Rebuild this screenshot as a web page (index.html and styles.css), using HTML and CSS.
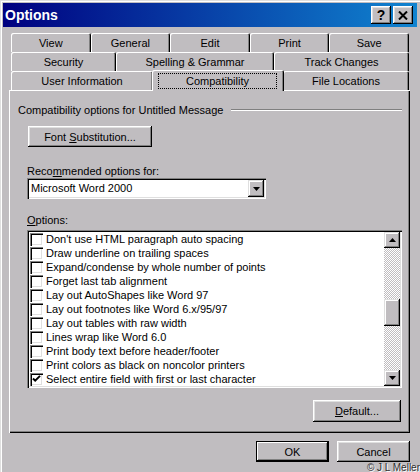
FILE: index.html
```html
<!DOCTYPE html>
<html lang="en">
<head>
  <meta charset="UTF-8">
  <meta name="viewport" content="width=device-width, initial-scale=1.0">
  <title>Options</title>
  <link rel="stylesheet" href="styles.css">
</head>
<body>
  <div class="window">
    <!-- Title bar -->
    <div class="titlebar">
      <span class="title">Options</span>
      <div class="caption-buttons">
        <div class="caption-btn help">?</div>
        <div class="caption-btn close">
          <svg width="10" height="9" viewBox="0 0 10 9"><path d="M1 0.5 L9 8.5 M9 0.5 L1 8.5" stroke="#000" stroke-width="2"/></svg>
        </div>
      </div>
    </div>

    <div class="body">
      <!-- Tabs -->
      <div class="tabs">
        <div class="tab-row equal">
          <div class="tab">View</div>
          <div class="tab">General</div>
          <div class="tab">Edit</div>
          <div class="tab">Print</div>
          <div class="tab">Save</div>
        </div>
        <div class="tab-row">
          <div class="tab w-security">Security</div>
          <div class="tab w-spelling">Spelling &amp; Grammar</div>
          <div class="tab w-track">Track Changes</div>
        </div>
        <div class="tab-row">
          <div class="tab w-user">User Information</div>
          <div class="tab w-compat active"><span class="focus">Compatibility</span></div>
          <div class="tab w-files">File Locations</div>
        </div>
      </div>

      <!-- Tab page -->
      <div class="panel">
        <div class="group-head">
          <span>Compatibility options for Untitled Message</span>
          <span class="etch"></span>
        </div>

        <div class="indent">
          <div class="btn font-sub"><span>Font <u>S</u>ubstitution...</span></div>

          <div class="field-label first">Reco<u>m</u>mended options for:</div>
          <div class="combo">
            <span class="combo-text">Microsoft Word 2000</span>
            <span class="combo-btn">
              <svg width="7" height="4" viewBox="0 0 7 4"><path d="M0 0 H7 L3.5 4 Z" fill="#000"/></svg>
            </span>
          </div>

          <div class="field-label"><u>O</u>ptions:</div>
          <div class="listbox">
            <div class="list-items" id="list"></div>
            <div class="scrollbar">
              <span class="scroll-btn">
                <svg width="7" height="4" viewBox="0 0 7 4"><path d="M0 4 H7 L3.5 0 Z" fill="#000"/></svg>
              </span>
              <div class="track"><span class="thumb"></span></div>
              <span class="scroll-btn">
                <svg width="7" height="4" viewBox="0 0 7 4"><path d="M0 0 H7 L3.5 4 Z" fill="#000"/></svg>
              </span>
            </div>
          </div>

          <div class="right-row">
            <div class="btn default-btn"><span><u>D</u>efault...</span></div>
          </div>
        </div>
      </div>

      <!-- Dialog buttons -->
      <div class="dialog-buttons">
        <div class="btn ok">OK</div>
        <div class="btn">Cancel</div>
      </div>
    </div>

    <div class="credit">© J L Meller</div>
  </div>

  <script>
    // Options shown in the list
    const options = [
      ["Don't use HTML paragraph auto spacing", false],
      ["Draw underline on trailing spaces", false],
      ["Expand/condense by whole number of points", false],
      ["Forget last tab alignment", false],
      ["Lay out AutoShapes like Word 97", false],
      ["Lay out footnotes like Word 6.x/95/97", false],
      ["Lay out tables with raw width", false],
      ["Lines wrap like Word 6.0", false],
      ["Print body text before header/footer", false],
      ["Print colors as black on noncolor printers", false],
      ["Select entire field with first or last character", true]
    ];

    const list = document.getElementById('list');
    options.forEach(([label, checked]) => {
      const row = document.createElement('div');
      row.classList.add('list-row');
      const mark = checked
        ? '<svg width="13" height="13" viewBox="0 0 13 13"><path d="M3 5.5 L5.2 7.7 L10 2.9" stroke="#000" stroke-width="2" fill="none"/></svg>'
        : '';
      row.innerHTML = `<span class="checkbox">${mark}</span><span class="list-label">${label}</span>`;
      list.appendChild(row);
    });
  </script>
</body>
</html>
```

FILE: styles.css
```css
/* General */
* {
  box-sizing: border-box;
}

body {
  margin: 0;
  font-family: "Liberation Sans", Arial, sans-serif;
  font-size: 11px;
  color: #000;
  background: #c0bdc0;
}

u {
  text-decoration-thickness: 1px;
  text-underline-offset: 1px;
}

.window {
  position: relative;
  width: 420px;
  height: 472px;
  padding: 3px 3px 0;
  background: #c0bdc0;
  box-shadow: inset 1px 1px #dfdfdf, inset 2px 2px #fff;
  overflow: hidden;
}

/* Title bar */
.titlebar {
  display: flex;
  align-items: center;
  height: 24px;
  padding: 0 4px 0 2px;
  background: linear-gradient(90deg, #000080, #1084d0);
}

.title {
  color: #fff;
  font-weight: bold;
  font-size: 14px;
}

.caption-buttons {
  margin-left: auto;
  display: flex;
  gap: 2px;
}

.caption-btn {
  width: 20px;
  height: 18px;
  display: flex;
  align-items: center;
  justify-content: center;
  background: #c0bdc0;
  box-shadow: inset -1px -1px #000, inset 1px 1px #fff, inset -2px -2px #808080, inset 2px 2px #dfdfdf;
}

.caption-btn.help {
  font-weight: bold;
  font-size: 14px;
  line-height: 18px;
}

/* Body */
.body {
  margin: 6px 7px 0 6px;
}

/* Tabs */
.tab-row {
  display: flex;
  height: 19px;
  margin: 0 1px 0 2px;
}

.tab {
  height: 19px;
  padding-top: 2px;
  line-height: 17px;
  text-align: center;
  white-space: nowrap;
  background: #c0bdc0;
  border-radius: 2px 2px 0 0;
  box-shadow: inset 1px 1px #fff, inset -1px 0 #000, inset -2px 0 #808080;
}

.tab-row.equal .tab {
  flex: 1;
}

.w-security { width: 105px; }
.w-spelling { width: 158px; }
.w-track { width: 135px; }
.w-user { width: 142px; }
.w-compat { width: 130px; }
.w-files { width: 126px; }

.tab.active {
  position: relative;
  z-index: 1;
  width: 132px;
  height: 21px;
  margin: -1px -1px 0;
  padding: 3px 7px 2px 6px;
}

.focus {
  display: block;
  height: 16px;
  line-height: 15px;
  border: 1px dotted #000;
}

/* Tab page */
.panel {
  height: 343px;
  padding: 13px 8px 0 9px;
  box-shadow: inset 1px 1px #fff, inset -1px -1px #000, inset -2px -2px #808080;
}

.group-head {
  display: flex;
  align-items: center;
  height: 14px;
  line-height: 14px;
}

.etch {
  flex: 1;
  height: 2px;
  margin-left: 8px;
  border-top: 1px solid #808080;
  border-bottom: 1px solid #fff;
}

.indent {
  padding-left: 9px;
}

/* Buttons */
.btn {
  display: flex;
  align-items: center;
  justify-content: center;
  height: 21px;
  white-space: nowrap;
  background: #c0bdc0;
  box-shadow: inset -1px -1px #000, inset 1px 1px #fff, inset -2px -2px #808080, inset 2px 2px #dfdfdf;
}

.font-sub {
  width: 124px;
  margin: 9px 0 0 1px;
}

.field-label {
  height: 14px;
  line-height: 14px;
  margin-top: 14px;
}

.field-label.first {
  margin-top: 17px;
}

/* Combo box */
.combo {
  display: flex;
  width: 239px;
  height: 21px;
  padding: 2px;
  background: #fff;
  box-shadow: inset 1px 1px #808080, inset 2px 2px #000, inset -1px -1px #fff, inset -2px -2px #dfdfdf;
}

.combo-text {
  flex: 1;
  padding-left: 2px;
  line-height: 17px;
}

.combo-btn,
.scroll-btn {
  display: flex;
  align-items: center;
  justify-content: center;
  width: 16px;
  background: #c0bdc0;
  box-shadow: inset -1px -1px #000, inset 1px 1px #dfdfdf, inset -2px -2px #808080, inset 2px 2px #fff;
}

/* List box */
.listbox {
  display: flex;
  width: 375px;
  height: 158px;
  margin-top: 3px;
  padding: 2px;
  background: #fff;
  box-shadow: inset 1px 1px #808080, inset 2px 2px #000, inset -1px -1px #fff, inset -2px -2px #dfdfdf;
}

.list-items {
  flex: 1;
  overflow: hidden;
}

.list-row {
  display: flex;
  align-items: center;
  height: 14px;
  padding-left: 1px;
  white-space: nowrap;
}

.checkbox {
  width: 13px;
  height: 13px;
  background: #fff;
  box-shadow: inset 1px 1px #808080, inset 2px 2px #000, inset -1px -1px #fff, inset -2px -2px #dfdfdf;
}

.checkbox svg {
  display: block;
}

.list-label {
  margin-left: 3px;
}

.scrollbar {
  display: flex;
  flex-direction: column;
  width: 16px;
}

.scroll-btn {
  height: 16px;
}

.track {
  flex: 1;
  background: repeating-conic-gradient(#c0bdc0 0 25%, #fff 0 50%) 0 0 / 2px 2px;
}

.thumb {
  display: block;
  height: 27px;
  margin-top: 51px;
  background: #c0bdc0;
  box-shadow: inset -1px -1px #000, inset 1px 1px #dfdfdf, inset -2px -2px #808080, inset 2px 2px #fff;
}

.right-row {
  display: flex;
  justify-content: flex-end;
  margin-top: 12px;
}

.default-btn {
  width: 88px;
  height: 22px;
  margin-right: 1px;
}

/* Dialog buttons */
.dialog-buttons {
  display: flex;
  justify-content: flex-end;
  gap: 8px;
  margin-top: 8px;
}

.dialog-buttons .btn {
  width: 73px;
}

.btn.ok {
  box-shadow: inset 0 0 0 1px #000, inset -2px -2px #000, inset 2px 2px #fff, inset -3px -3px #808080;
}

.credit {
  position: absolute;
  right: 0;
  bottom: -1px;
  font-size: 10px;
  color: #303030;
  text-shadow: 1px 1px 0 #fff;
}
```
